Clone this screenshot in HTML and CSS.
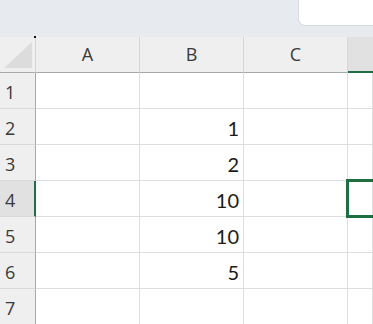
FILE: index.html
```html
<!DOCTYPE html>
<html>
<head>
<meta charset="utf-8">
<link rel="stylesheet" href="styles.css">
</head>
<body>
<div class="topbar"><div class="namebox"></div></div>
<div class="sheet">
  <div class="corner"><span class="dot"></span><svg class="tri" width="28" height="26" viewBox="0 0 28 26"><polygon points="0,26 28,26 28,0" fill="#dcdcdc"/></svg></div>
  <div class="colhead">A</div>
  <div class="colhead">B</div>
  <div class="colhead">C</div>
  <div class="colhead active-col"></div>

  <div class="rowhead">1</div><div class="cell"></div><div class="cell"></div><div class="cell"></div><div class="cell"></div>
  <div class="rowhead">2</div><div class="cell"></div><div class="cell num">1</div><div class="cell"></div><div class="cell"></div>
  <div class="rowhead">3</div><div class="cell"></div><div class="cell num">2</div><div class="cell"></div><div class="cell"></div>
  <div class="rowhead active-row">4</div><div class="cell"></div><div class="cell num">10</div><div class="cell"></div><div class="cell active-cell"></div>
  <div class="rowhead">5</div><div class="cell"></div><div class="cell num">10</div><div class="cell"></div><div class="cell"></div>
  <div class="rowhead">6</div><div class="cell"></div><div class="cell num">5</div><div class="cell"></div><div class="cell"></div>
  <div class="rowhead">7</div><div class="cell"></div><div class="cell"></div><div class="cell"></div><div class="cell"></div>
</div>
</body>
</html>
```
FILE: styles.css
```css
html, body {
  margin: 0;
  padding: 0;
  overflow: hidden;
  background: #ffffff;
}
body {
  width: 373px;
  height: 324px;
}
.topbar {
  height: 37px;
  background: #e7eaee;
  display: flex;
  justify-content: flex-end;
  align-items: flex-start;
}
.namebox {
  width: 74px;
  height: 25px;
  background: #ffffff;
  border-left: 1px solid #d6d9dd;
  border-bottom: 1px solid #d6d9dd;
  border-bottom-left-radius: 7px;
}
.sheet {
  display: grid;
  grid-template-columns: 36px 104px 104px 104px 1fr;
  grid-auto-rows: 36px;
}
.sheet > div {
  box-sizing: border-box;
}
.corner {
  position: relative;
  background: #efefef;
  border-right: 1px solid #d6d6d6;
  border-bottom: 1px solid #a9a9a9;
  display: flex;
  justify-content: flex-end;
  align-items: flex-end;
  padding: 0 3px 4px 0;
}
.tri {
  display: block;
}
.dot {
  position: absolute;
  right: -1px;
  top: -1px;
  width: 2px;
  height: 2px;
  background: #111;
}
.colhead {
  background: #efefef;
  border-right: 1px solid #d6d6d6;
  border-bottom: 1px solid #a9a9a9;
  display: flex;
  align-items: center;
  justify-content: center;
  font-family: "Open Sans", sans-serif;
  font-size: 18px;
  color: #3a3a3a;
  padding-bottom: 1px;
}
.colhead.active-col {
  background: #e1e1e1;
  border-right: none;
  border-bottom: 2px solid #1e6e42;
}
.rowhead {
  background: #efefef;
  border-right: 1px solid #a9a9a9;
  border-bottom: 1px solid #dadada;
  display: flex;
  align-items: center;
  padding-left: 5px;
  padding-top: 2px;
  font-family: "Open Sans", sans-serif;
  font-size: 18px;
  color: #3a3a3a;
}
.rowhead.active-row {
  background: #e1e1e1;
  border-right: 2px solid #1e6e42;
}
.cell {
  border-right: 1px solid #dedede;
  border-bottom: 1px solid #dedede;
}
.cell.num {
  display: flex;
  align-items: center;
  justify-content: flex-end;
  padding-right: 4px;
  padding-top: 2px;
  font-family: Lato, "Liberation Sans", sans-serif;
  font-size: 20px;
  color: #1a1a1a;
}
.active-cell {
  position: relative;
}
.active-cell::after {
  content: "";
  position: absolute;
  left: -2px;
  top: -2px;
  right: -10px;
  bottom: -2px;
  border: 3px solid #1e6e42;
}
```
